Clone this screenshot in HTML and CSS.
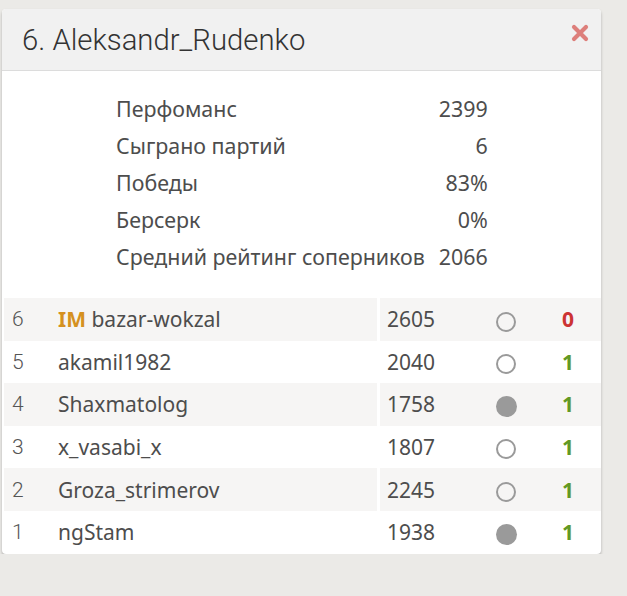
FILE: index.html
```html
<!DOCTYPE html>
<html lang="ru">
  <head>
    <meta charset="UTF-8" />
    <meta name="viewport" content="width=device-width, initial-scale=1.0" />
    <title>Aleksandr_Rudenko</title>
    <link rel="stylesheet" href="styles.css">
  </head>
  <body>
    <div class="player-info">
      <div class="player-head">
        <h2 class="player-title">6. Aleksandr_Rudenko</h2>
        <svg class="close" width="18" height="18" viewBox="0 0 18 18">
          <path d="M3 3 L15 15 M15 3 L3 15" stroke="#dd7f7b" stroke-width="4.2" stroke-linecap="round" />
        </svg>
      </div>

      <div class="stats">
        <table class="stats-table">
          <tr><th>Перфоманс</th><td>2399</td></tr>
          <tr><th>Сыграно партий</th><td>6</td></tr>
          <tr><th>Победы</th><td>83%</td></tr>
          <tr><th>Берсерк</th><td>0%</td></tr>
          <tr><th>Средний рейтинг соперников</th><td>2066</td></tr>
        </table>
      </div>

      <table class="pairings">
        <tr>
          <td class="round">6</td>
          <td class="name"><span class="title">IM</span> bazar-wokzal</td>
          <td class="rating">2605</td>
          <td class="color"><span class="piece white"></span></td>
          <td class="result loss">0</td>
        </tr>
        <tr>
          <td class="round">5</td>
          <td class="name">akamil1982</td>
          <td class="rating">2040</td>
          <td class="color"><span class="piece white"></span></td>
          <td class="result win">1</td>
        </tr>
        <tr>
          <td class="round">4</td>
          <td class="name">Shaxmatolog</td>
          <td class="rating">1758</td>
          <td class="color"><span class="piece black"></span></td>
          <td class="result win">1</td>
        </tr>
        <tr>
          <td class="round">3</td>
          <td class="name">x_vasabi_x</td>
          <td class="rating">1807</td>
          <td class="color"><span class="piece white"></span></td>
          <td class="result win">1</td>
        </tr>
        <tr>
          <td class="round">2</td>
          <td class="name">Groza_strimerov</td>
          <td class="rating">2245</td>
          <td class="color"><span class="piece white"></span></td>
          <td class="result win">1</td>
        </tr>
        <tr>
          <td class="round">1</td>
          <td class="name">ngStam</td>
          <td class="rating">1938</td>
          <td class="color"><span class="piece black"></span></td>
          <td class="result win">1</td>
        </tr>
      </table>
    </div>
  </body>
</html>
```

FILE: styles.css
```css
body {
  margin: 0;
  padding: 9px 26px 0 2px;
  background-color: #ebeae7;
  font-family: "Noto Sans", "Open Sans", sans-serif;
  color: #4d4d4d;
}

.player-info {
  background-color: white;
  border-radius: 4px;
  box-shadow: 0 2px 3px rgba(0, 0, 0, 0.25);
  overflow: hidden;
}

.player-head {
  display: flex;
  justify-content: space-between;
  align-items: center;
  height: 61px;
  padding: 0 12px 0 20px;
  background-color: #f1f1f1;
  border-bottom: 1px solid #dcdcdc;
}

.player-title {
  margin: 0;
  font-family: Roboto, sans-serif;
  font-weight: 300;
  font-size: 29.3px;
  color: #333;
}

.close {
  align-self: flex-start;
  margin-top: 15px;
}

.stats {
  padding: 19px 0 23px 114px;
}

.stats-table {
  border-collapse: collapse;
  font-size: 21.4px;
}

.stats-table th {
  font-weight: normal;
  text-align: left;
  padding: 0;
  height: 37px;
}

.stats-table td {
  text-align: right;
  padding: 0 0 0 14px;
}

.pairings {
  width: calc(100% - 2px);
  margin-left: 2px;
  border-collapse: collapse;
  table-layout: fixed;
  font-size: 21px;
}

.pairings td {
  height: 42.6px;
  padding: 0;
}

.pairings tr:nth-child(odd) td {
  background-color: #f6f5f4;
}

.round {
  width: 46px;
  padding-left: 8px !important;
  font-family: Roboto, sans-serif;
  font-weight: 300;
  color: #555;
}

.name .title {
  font-weight: bold;
  color: #d59120;
}

.rating {
  width: 90px;
  padding-left: 7px !important;
  border-left: 3px solid white;
}

.color {
  width: 58px;
  text-align: center;
}

.piece {
  display: inline-block;
  width: 16px;
  height: 16px;
  border-radius: 50%;
  vertical-align: middle;
}

.piece.white {
  border: 2.5px solid #9a9a9a;
}

.piece.black {
  width: 21px;
  height: 21px;
  background-color: #9a9a9a;
}

.result {
  width: 66px;
  font-weight: bold;
  text-align: center;
}

.loss {
  color: #cc3333;
}

.win {
  color: #629924;
}
```
